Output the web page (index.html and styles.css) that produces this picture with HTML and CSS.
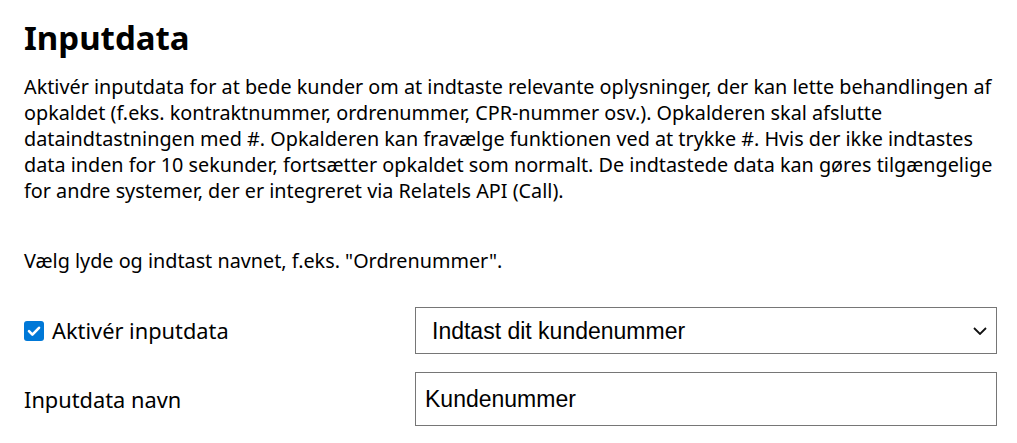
FILE: index.html
```html
<!DOCTYPE html>
<html lang="da">
<head>
<meta charset="utf-8">
<title>Inputdata</title>
<link rel="stylesheet" href="styles.css">
</head>
<body>
<main class="page">
  <h1 class="title">Inputdata</h1>
  <p class="desc">Aktivér inputdata for at bede kunder om at indtaste relevante oplysninger, der kan lette behandlingen af opkaldet (f.eks. kontraktnummer, ordrenummer, CPR-nummer osv.). Opkalderen skal afslutte dataindtastningen med #. Opkalderen kan fravælge funktionen ved at trykke #. Hvis der ikke indtastes data inden for 10 sekunder, fortsætter opkaldet som normalt. De indtastede data kan gøres tilgængelige for andre systemer, der er integreret via Relatels API (Call).</p>
  <p class="hint">Vælg lyde og indtast navnet, f.eks. "Ordrenummer".</p>
  <div class="form">
    <label class="check">
      <span class="box"><svg viewBox="0 0 20 20" width="20" height="20"><path d="M5 10.2 L8.4 13.6 L15 6.8" fill="none" stroke="#fff" stroke-width="2.6" stroke-linecap="round" stroke-linejoin="round"/></svg></span>
      <span>Aktivér inputdata</span>
    </label>
    <div class="select-wrap">
      <select class="select"><option>Indtast dit kundenummer</option></select>
      <svg class="chev" viewBox="0 0 14 8" width="14" height="8"><path d="M1 1 L7 7 L13 1" fill="none" stroke="#111" stroke-width="1.8"/></svg>
    </div>
    <label class="label" for="navn">Inputdata navn</label>
    <input id="navn" class="input" type="text" value="Kundenummer">
  </div>
</main>
</body>
</html>
```
FILE: styles.css
```css
html, body {
  margin: 0;
  padding: 0;
  background: #fff;
}
body {
  font-family: "Noto Sans", "Open Sans", sans-serif;
  color: #000;
}
.page {
  padding: 14px 20px 0 24px;
}
.title {
  font-size: 33px;
  font-weight: 700;
  line-height: 48px;
  margin: 0 0 12px 0;
}
.desc, .hint {
  font-size: 19.8px;
  line-height: 26px;
  margin: 0;
}
.hint {
  margin-top: 44px;
}
.form {
  display: grid;
  grid-template-columns: 391px 1fr;
  row-gap: 18px;
  align-items: center;
  margin-top: 33px;
}
.check, .label {
  display: flex;
  align-items: center;
  gap: 8px;
  font-size: 21.8px;
}
.box {
  width: 20px;
  height: 20px;
  border-radius: 3px;
  background: #0078d7;
  display: flex;
}
.select-wrap {
  position: relative;
}
.select {
  appearance: none;
  -webkit-appearance: none;
  width: 100%;
  height: 47px;
  box-sizing: border-box;
  border: 1px solid #767676;
  border-radius: 0;
  background: #fff;
  font-family: "Liberation Sans", Arial, sans-serif;
  font-size: 23px;
  color: #000;
  padding: 0 16px;
}
.chev {
  position: absolute;
  right: 10px;
  top: 20px;
  pointer-events: none;
}
.input {
  width: 100%;
  height: 54px;
  box-sizing: border-box;
  border: 1px solid #767676;
  border-radius: 0;
  font-family: "Liberation Sans", Arial, sans-serif;
  font-size: 23px;
  color: #000;
  padding: 0 9px;
  outline: none;
}
```
